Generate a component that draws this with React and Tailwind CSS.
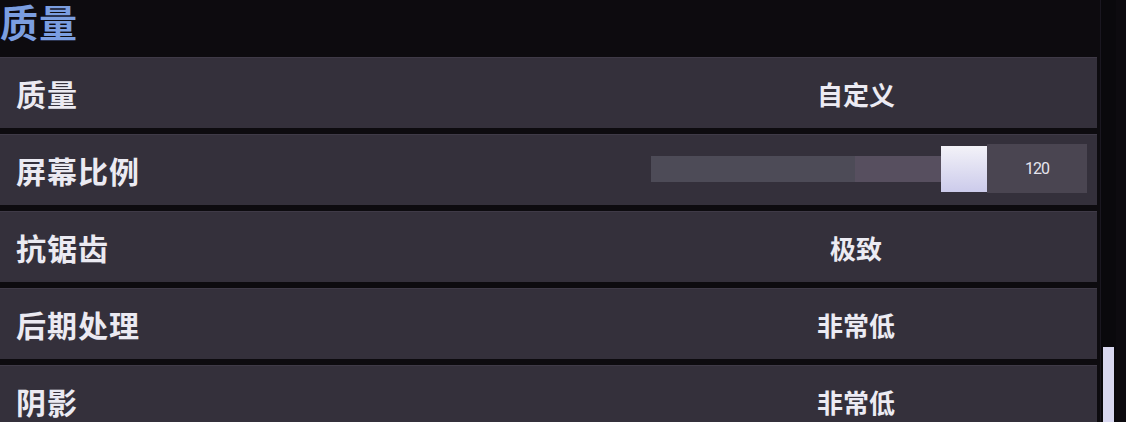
export default function App() {
  const font = { fontFamily: '"Noto Sans CJK SC", "Noto Sans", sans-serif' };
  const rows = [
    { label: "质量", value: "自定义" },
    { label: "屏幕比例", slider: true },
    { label: "抗锯齿", value: "极致" },
    { label: "后期处理", value: "非常低" },
    { label: "阴影", value: "非常低" },
  ];
  return (
    <div className="w-[1126px] h-[422px] bg-[#0d0b0f] overflow-hidden flex" style={font}>
      <div className="w-[1097px] flex flex-col">
        <div className="h-[57px] shrink-0 flex items-start">
          <span className="text-[38px] leading-[42px] font-bold text-[#7b9ee0] tracking-[1px]">质量</span>
        </div>
        <div className="flex flex-col gap-[6px] shrink-0">
          {rows.map((r, i) => (
            <div key={i} className="h-[71px] shrink-0 bg-[#34303b] border-t border-[#3f3a47] flex items-center relative">
              <span className="pl-[16px] text-[30px] font-bold text-[#ebeaf2] tracking-[1px]">{r.label}</span>
              {r.value && (
                <span className="absolute left-[856px] -translate-x-1/2 text-[26px] font-bold text-[#ecebf3]">{r.value}</span>
              )}
              {r.slider && (
                <div className="absolute left-[651px] top-[9px] flex items-center">
                  <div className="w-[290px] h-[26px] flex">
                    <div className="w-[204px] bg-[#4d4b57]" />
                    <div className="flex-1 bg-[#574f5f]" />
                  </div>
                  <div className="w-[46px] h-[46px] bg-gradient-to-b from-[#f3f2f8] to-[#cccbeb]" />
                  <div className="w-[100px] h-[49px] bg-[#4a4551] flex items-center justify-center text-[16px] text-[#e6e4ee] tracking-[-1px]" style={{ fontFamily: '"Liberation Sans Narrow", "Roboto", sans-serif' }}>120</div>
                </div>
              )}
            </div>
          ))}
        </div>
      </div>
      <div className="w-[3px]" />
      <div className="w-[16px] h-full bg-[#0a090c] border-l border-[#1a1720] flex flex-col items-center">
        <div className="mt-[347px] w-[11px] flex-1 bg-[#d9d8f0]" />
      </div>
    </div>
  );
}
